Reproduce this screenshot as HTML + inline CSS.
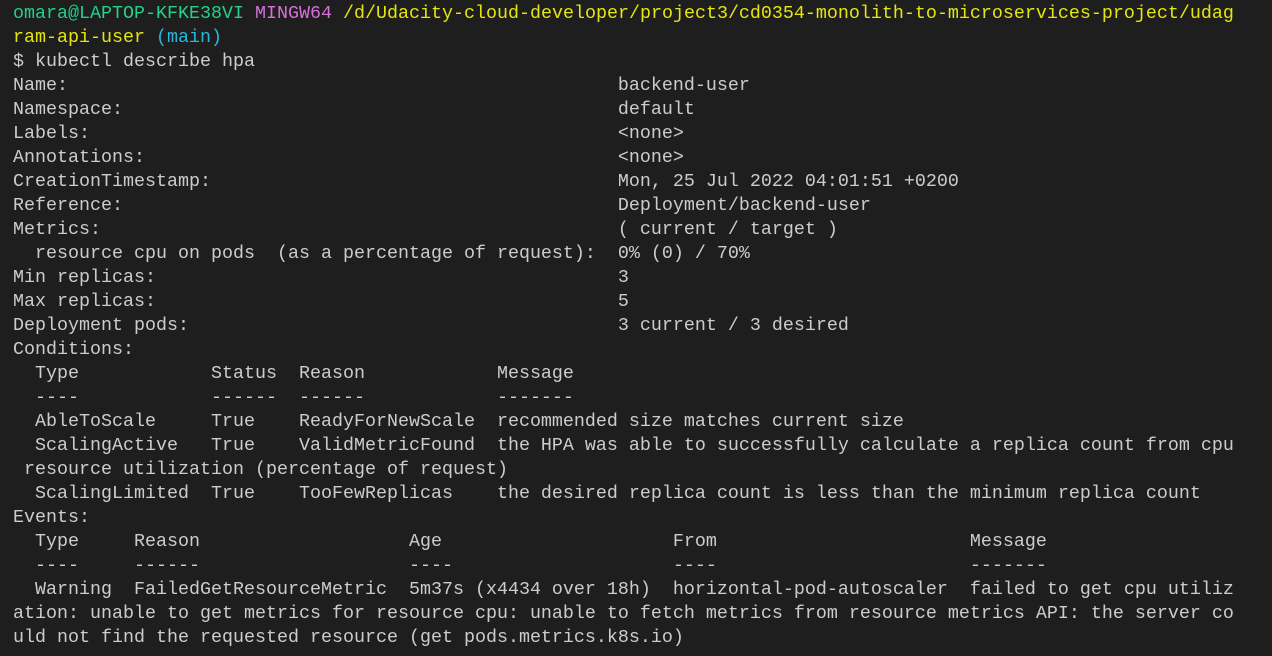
<!DOCTYPE html>
<html><head><meta charset="utf-8"><style>
html,body{margin:0;padding:0;background:#1e1e1e;width:1272px;height:656px;overflow:hidden}
pre{margin:0;padding:2px 0 0 13px;font-family:"Liberation Mono",monospace;font-size:18.33px;line-height:24px;color:#cccccc;white-space:pre}
.g{color:#23d18b}.m{color:#d670d6}.y{color:#e5e510}.c{color:#29b8db}
</style></head><body><pre><span class="g">omara@LAPTOP-KFKE38VI</span> <span class="m">MINGW64</span> <span class="y">/d/Udacity-cloud-developer/project3/cd0354-monolith-to-microservices-project/udag
ram-api-user</span> <span class="c">(main)</span>
$ kubectl describe hpa
Name:                                                  backend-user
Namespace:                                             default
Labels:                                                &lt;none&gt;
Annotations:                                           &lt;none&gt;
CreationTimestamp:                                     Mon, 25 Jul 2022 04:01:51 +0200
Reference:                                             Deployment/backend-user
Metrics:                                               ( current / target )
  resource cpu on pods  (as a percentage of request):  0% (0) / 70%
Min replicas:                                          3
Max replicas:                                          5
Deployment pods:                                       3 current / 3 desired
Conditions:
  Type            Status  Reason            Message
  ----            ------  ------            -------
  AbleToScale     True    ReadyForNewScale  recommended size matches current size
  ScalingActive   True    ValidMetricFound  the HPA was able to successfully calculate a replica count from cpu
 resource utilization (percentage of request)
  ScalingLimited  True    TooFewReplicas    the desired replica count is less than the minimum replica count
Events:
  Type     Reason                   Age                     From                       Message
  ----     ------                   ----                    ----                       -------
  Warning  FailedGetResourceMetric  5m37s (x4434 over 18h)  horizontal-pod-autoscaler  failed to get cpu utiliz
ation: unable to get metrics for resource cpu: unable to fetch metrics from resource metrics API: the server co
uld not find the requested resource (get pods.metrics.k8s.io)</pre></body></html>
